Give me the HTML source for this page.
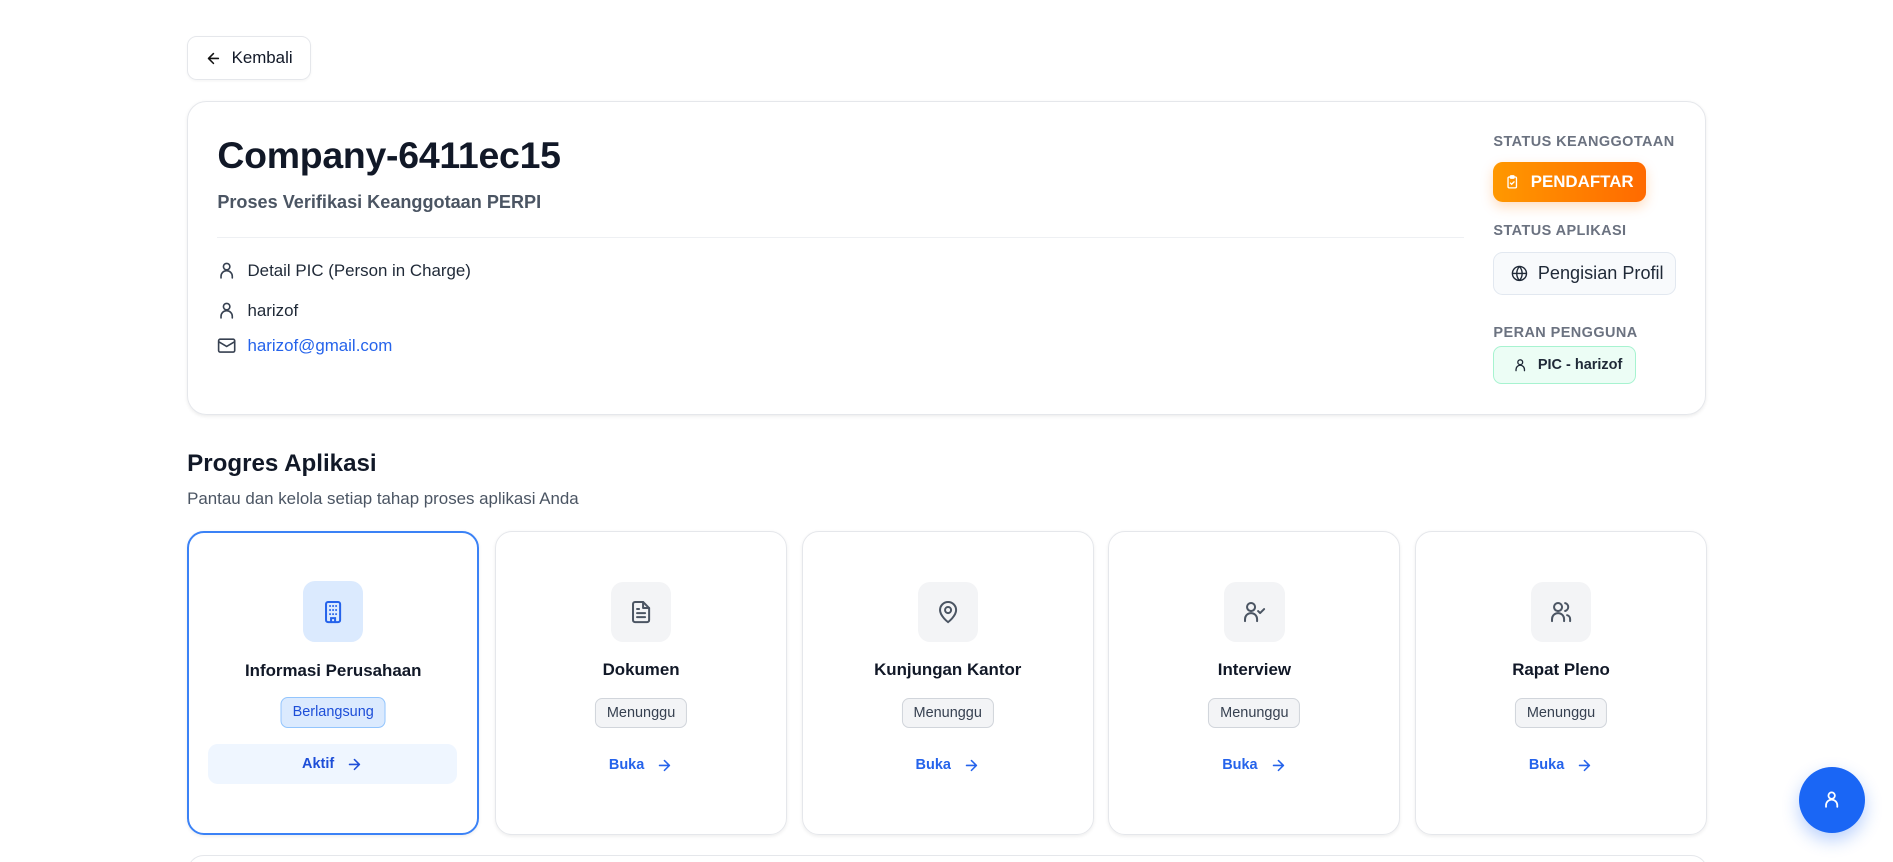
<!DOCTYPE html>
<html><head><meta charset="utf-8"><style>
html{margin:0;padding:0;overflow:hidden;background:#fff;width:1893px;height:861px}
body{margin:0;padding:0;zoom:1.2073;width:1568px;height:714px;position:relative;font-family:"Liberation Sans",sans-serif;color:#111827;overflow:hidden}
.abs{position:absolute}
svg{display:block}
.back{left:155px;top:30px;width:103px;height:36px;border:1px solid #e5e7eb;border-radius:8px;display:flex;align-items:center;gap:8px;padding-left:14px;box-sizing:border-box;font-size:14px;font-weight:500;box-shadow:0 1px 2px rgba(0,0,0,.04)}
.card{left:155px;top:84px;width:1258px;height:260px;border:1px solid #e5e7eb;border-radius:16px;box-sizing:border-box;box-shadow:0 1px 3px rgba(0,0,0,.08)}
.title{left:180px;top:111px;font-size:31px;font-weight:700;letter-spacing:-.2px}
.sub{left:180px;top:159px;font-size:15px;color:#4b5563;font-weight:600}
.div{left:180px;top:196px;width:1033px;height:1px;background:#eef0f3}
.row{left:180px;display:flex;align-items:center;gap:9px;font-size:14px;color:#1f2937}
.lbl{left:1237px;font-size:12px;font-weight:600;color:#6b7280;letter-spacing:.35px}
.pend{left:1237px;top:134px;width:126px;height:33px;border-radius:8px;background:linear-gradient(90deg,#ff9800,#ff6a00);color:#fff;font-weight:700;font-size:14px;display:flex;align-items:center;justify-content:center;gap:9px;box-shadow:0 4px 10px rgba(255,120,0,.25)}
.prof{left:1237px;top:209px;width:151px;height:35px;border:1px solid #e2e8f0;background:#f8fafc;border-radius:8px;box-sizing:border-box;display:flex;align-items:center;gap:8px;padding-left:14px;font-size:15px;font-weight:500;color:#1f2937}
.pic{left:1237px;top:287px;width:118px;height:31px;border:1.5px solid #a7f3d0;background:#ecfdf5;border-radius:7px;box-sizing:border-box;display:flex;align-items:center;gap:9px;padding-left:15px;font-size:12px;font-weight:600;color:#1f2937}
.h2{left:155px;top:373px;font-size:20px;font-weight:700}
.p{left:155px;top:405px;font-size:14px;color:#4b5563}
.sc{top:440px;width:242px;height:252px;border:1px solid #e5e7eb;border-radius:14px;box-sizing:border-box;box-shadow:0 1px 3px rgba(0,0,0,.07)}
.sc.act{border:2px solid #3b82f6}
.ib{position:absolute;left:50%;margin-left:-25px;top:41px;width:50px;height:50px;border-radius:10px;background:#f3f4f6;display:flex;align-items:center;justify-content:center}
.act .ib{top:40px;background:#dbeafe}
.st{position:absolute;left:0;right:0;top:106px;text-align:center;font-size:14px;font-weight:600}
.bd{position:absolute;left:50%;transform:translateX(-50%);top:137px;height:25px;padding:0 9px;border:1px solid #d1d5db;background:#f3f4f6;border-radius:6px;box-sizing:border-box;font-size:12px;color:#374151;display:flex;align-items:center;white-space:nowrap}
.act .bd{top:136px;background:#dbeafe;border-color:#93c5fd;color:#1d4ed8}
.bk{position:absolute;left:0;right:0;top:186px;display:flex;justify-content:center;align-items:center;gap:10px;font-size:12px;font-weight:600;color:#2563eb}
.ak{position:absolute;left:16px;right:17px;top:175px;height:33px;background:#eff6ff;border-radius:8px;display:flex;justify-content:center;align-items:center;gap:10px;font-size:12px;font-weight:600;color:#1d4ed8}
.fab{left:1490px;top:635px;width:55px;height:55px;border-radius:50%;background:#1a66f5;display:flex;align-items:center;justify-content:center;box-shadow:0 6px 14px rgba(26,102,245,.3)}
.low{left:155px;top:708px;width:1258px;height:40px;border:1px solid #e5e7eb;border-radius:14px}
</style></head><body>
<div class="abs back"><svg width="14" height="14" viewBox="0 0 24 24" fill="none" stroke="#111" stroke-width="2.2" stroke-linecap="round" stroke-linejoin="round"><path d="M19 12H5M12 19l-7-7 7-7"/></svg>Kembali</div>
<div class="abs card"></div>
<div class="abs title">Company-6411ec15</div>
<div class="abs sub">Proses Verifikasi Keanggotaan PERPI</div>
<div class="abs div"></div>
<div class="abs row" style="top:216px"><svg width="16" height="16" viewBox="0 0 24 24" fill="none" stroke="#374151" stroke-width="2" stroke-linecap="round"><circle cx="12" cy="7" r="4"/><path d="M5 21v-2a7 7 0 0 1 14 0v2"/></svg><span>Detail PIC (Person in Charge)</span></div>
<div class="abs row" style="top:249px"><svg width="16" height="16" viewBox="0 0 24 24" fill="none" stroke="#374151" stroke-width="2" stroke-linecap="round"><circle cx="12" cy="7" r="4"/><path d="M5 21v-2a7 7 0 0 1 14 0v2"/></svg>harizof</div>
<div class="abs row" style="top:278px"><svg width="16" height="16" viewBox="0 0 24 24" fill="none" stroke="#374151" stroke-width="2"><rect x="2" y="4" width="20" height="16" rx="2"/><path d="M2 7l10 6 10-6"/></svg><span style="color:#2563eb">harizof@gmail.com</span></div>
<div class="abs lbl" style="top:111px">STATUS KEANGGOTAAN</div>
<div class="abs pend"><svg width="12" height="13" viewBox="0 0 24 24" fill="none" stroke="#fff" stroke-width="2.2" stroke-linecap="round"><rect x="5" y="4" width="14" height="18" rx="2"/><rect x="9" y="2" width="6" height="4" rx="1"/><path d="M9 14l2 2 4-4"/></svg>PENDAFTAR</div>
<div class="abs lbl" style="top:185px">STATUS APLIKASI</div>
<div class="abs prof"><svg width="14" height="14" viewBox="0 0 24 24" fill="none" stroke="#1f2937" stroke-width="2"><circle cx="12" cy="12" r="10"/><path d="M2 12h20M12 2a15 15 0 0 1 0 20M12 2a15 15 0 0 0 0 20"/></svg>Pengisian Profil</div>
<div class="abs lbl" style="top:269px">PERAN PENGGUNA</div>
<div class="abs pic"><svg width="12" height="12" viewBox="0 0 24 24" fill="none" stroke="#1f2937" stroke-width="2.2" stroke-linecap="round"><circle cx="12" cy="7" r="4"/><path d="M5 21v-2a7 7 0 0 1 14 0v2"/></svg>PIC - harizof</div>
<div class="abs h2">Progres Aplikasi</div>
<div class="abs p">Pantau dan kelola setiap tahap proses aplikasi Anda</div>

<div class="abs sc act" style="left:155px"><div class="ib"><svg width="20" height="20" viewBox="0 0 24 24" fill="none" stroke="#2563eb" stroke-width="2" stroke-linecap="round"><rect x="5" y="2" width="14" height="20" rx="2"/><path d="M10 22v-4h4v4M9 6h.01M12 6h.01M15 6h.01M9 10h.01M12 10h.01M15 10h.01M9 14h.01M12 14h.01M15 14h.01"/></svg></div><div class="st">Informasi Perusahaan</div><div class="bd">Berlangsung</div><div class="ak">Aktif <svg width="14" height="14" viewBox="0 0 24 24" fill="none" stroke="#1d4ed8" stroke-width="2.2" stroke-linecap="round" stroke-linejoin="round"><path d="M5 12h14M12 5l7 7-7 7"/></svg></div></div>

<div class="abs sc" style="left:410px"><div class="ib"><svg width="20" height="20" viewBox="0 0 24 24" fill="none" stroke="#4b5563" stroke-width="2" stroke-linecap="round" stroke-linejoin="round"><path d="M14 2H6a2 2 0 0 0-2 2v16a2 2 0 0 0 2 2h12a2 2 0 0 0 2-2V8z"/><path d="M14 2v6h6M8 13h8M8 17h8M8 9h2"/></svg></div><div class="st">Dokumen</div><div class="bd">Menunggu</div><div class="bk">Buka <svg width="14" height="14" viewBox="0 0 24 24" fill="none" stroke="#2563eb" stroke-width="2.2" stroke-linecap="round" stroke-linejoin="round"><path d="M5 12h14M12 5l7 7-7 7"/></svg></div></div>

<div class="abs sc" style="left:664px"><div class="ib"><svg width="20" height="20" viewBox="0 0 24 24" fill="none" stroke="#4b5563" stroke-width="2" stroke-linecap="round"><path d="M20 10c0 6-8 12-8 12s-8-6-8-12a8 8 0 0 1 16 0z"/><circle cx="12" cy="10" r="3"/></svg></div><div class="st">Kunjungan Kantor</div><div class="bd">Menunggu</div><div class="bk">Buka <svg width="14" height="14" viewBox="0 0 24 24" fill="none" stroke="#2563eb" stroke-width="2.2" stroke-linecap="round" stroke-linejoin="round"><path d="M5 12h14M12 5l7 7-7 7"/></svg></div></div>

<div class="abs sc" style="left:918px"><div class="ib"><svg width="20" height="20" viewBox="0 0 24 24" fill="none" stroke="#4b5563" stroke-width="2" stroke-linecap="round" stroke-linejoin="round"><circle cx="9" cy="7" r="4"/><path d="M3 21v-2a6 6 0 0 1 12 0v2M16 11l2 2 4-4"/></svg></div><div class="st">Interview</div><div class="bd">Menunggu</div><div class="bk">Buka <svg width="14" height="14" viewBox="0 0 24 24" fill="none" stroke="#2563eb" stroke-width="2.2" stroke-linecap="round" stroke-linejoin="round"><path d="M5 12h14M12 5l7 7-7 7"/></svg></div></div>

<div class="abs sc" style="left:1172px"><div class="ib"><svg width="20" height="20" viewBox="0 0 24 24" fill="none" stroke="#4b5563" stroke-width="2" stroke-linecap="round" stroke-linejoin="round"><circle cx="9" cy="7" r="4"/><path d="M3 21v-2a6 6 0 0 1 12 0v2M16 3.1a4 4 0 0 1 0 7.8M21 21v-2a4 4 0 0 0-3-3.9"/></svg></div><div class="st">Rapat Pleno</div><div class="bd">Menunggu</div><div class="bk">Buka <svg width="14" height="14" viewBox="0 0 24 24" fill="none" stroke="#2563eb" stroke-width="2.2" stroke-linecap="round" stroke-linejoin="round"><path d="M5 12h14M12 5l7 7-7 7"/></svg></div></div>

<div class="abs low"></div>
<div class="abs fab"><svg width="16" height="16" viewBox="0 0 24 24" fill="none" stroke="#fff" stroke-width="2.2" stroke-linecap="round"><circle cx="12" cy="7" r="4"/><path d="M5 21v-2a7 7 0 0 1 14 0v2"/></svg></div>
</body></html>
